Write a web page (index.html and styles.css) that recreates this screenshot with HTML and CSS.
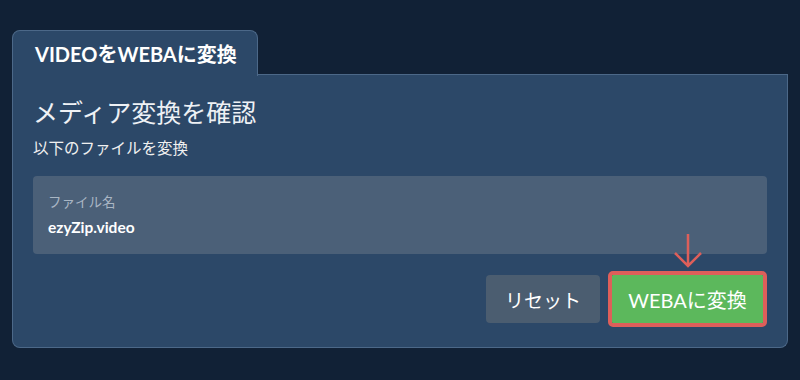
FILE: index.html
```html
<!DOCTYPE html>
<html lang="ja">
<head>
  <meta charset="UTF-8" />
  <meta name="viewport" content="width=device-width, initial-scale=1.0"/>
  <title>VIDEOをWEBAに変換</title>
  <link rel="stylesheet" href="styles.css">
</head>
<body>
  <div class="wrap">
    <div class="tabs">
      <div class="tab">VIDEOをWEBAに変換</div>
      <div class="tab-rest"></div>
    </div>

    <div class="panel">
      <h2 class="title">メディア変換を確認</h2>
      <p class="subtitle">以下のファイルを変換</p>

      <div class="file-box">
        <div class="file-label">ファイル名</div>
        <div class="file-name">ezyZip.video</div>
      </div>

      <div class="actions">
        <button class="btn btn-reset">リセット</button>
        <div class="highlight">
          <svg class="arrow" width="30" height="36" viewBox="0 0 30 36">
            <path d="M15 1 V33 M2 20 L15 33 L28 20" fill="none" stroke="#dd5f5a" stroke-width="2.5"/>
          </svg>
          <button class="btn btn-convert">WEBAに変換</button>
        </div>
      </div>
    </div>
  </div>
</body>
</html>
```

FILE: styles.css
```css
body {
  font-family: Lato, "Noto Sans CJK JP", sans-serif;
  background: #112136;
  margin: 0;
  padding: 30px 12px 0 12px;
  color: #f2f2f2;
}

.wrap {
  width: 776px;
}

.tabs {
  display: flex;
  height: 45px;
}

.tab {
  width: 246px;
  box-sizing: border-box;
  background: #2c4868;
  border: 1px solid #4c6888;
  border-bottom: none;
  border-radius: 8px 8px 0 0;
  padding: 10px 0 0 22px;
  font-size: 20px;
  line-height: 26px;
  font-weight: bold;
  color: #fff;
  position: relative;
  z-index: 1;
  height: 46px;
}

.tab-rest {
  flex: 1;
  border-bottom: 1px solid #4c6888;
}

.panel {
  background: #2c4868;
  border: 1px solid #4c6888;
  border-top: none;
  border-radius: 0 0 8px 8px;
  padding: 21px 20px 20px 20px;
}

.title {
  margin: 0;
  font-size: 25px;
  font-weight: normal;
  line-height: 32px;
  color: #eef1f5;
}

.subtitle {
  margin: 10px 0 0 0;
  font-size: 15.5px;
  line-height: 20px;
  color: #f0f0f0;
}

.file-box {
  margin-top: 18px;
  background: #4b6078;
  border-radius: 4px;
  height: 78px;
  box-sizing: border-box;
  padding: 16px 15px 0 15px;
}

.file-label {
  font-size: 13.5px;
  color: #a9b6c4;
  line-height: 20px;
}

.file-name {
  margin-top: 5px;
  font-size: 15.5px;
  font-weight: bold;
  color: #fff;
  line-height: 20px;
}

.actions {
  display: flex;
  justify-content: flex-end;
  align-items: center;
  gap: 8px;
  margin-top: 17px;
}

.highlight {
  border: 4px solid #dd5f5a;
  border-radius: 5px;
  position: relative;
}

.arrow {
  display: block;
  position: absolute;
  left: 61px;
  top: -42px;
}

.btn {
  font-family: Lato, "Noto Sans CJK JP", sans-serif;
  font-size: 19px;
  color: #fff;
  border: none;
  border-radius: 4px;
  cursor: pointer;
  display: block;
}

.btn-reset {
  width: 114px;
  height: 48px;
  background: #4b5d70;
}

.btn-convert {
  width: 151px;
  height: 48px;
  font-size: 20px;
  background: #5cb85c;
  border-radius: 1px;
}
```
